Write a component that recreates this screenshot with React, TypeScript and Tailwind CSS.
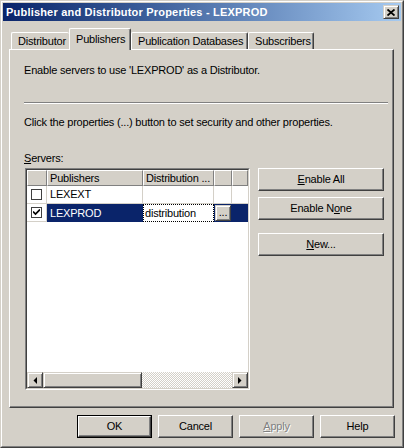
const raised =
  "bg-[#d4d0c8] border border-t-white border-l-white border-r-[#404040] border-b-[#404040] shadow-[inset_-1px_-1px_#808080]";
const raisedSb =
  "bg-[#d4d0c8] border border-t-[#d4d0c8] border-l-[#d4d0c8] border-r-[#404040] border-b-[#404040] shadow-[inset_1px_1px_#ffffff,inset_-1px_-1px_#808080]";

function Button({
  children,
  className = "",
  isDefault = false,
}: {
  children: React.ReactNode;
  className?: string;
  isDefault?: boolean;
}) {
  if (isDefault) {
    return (
      <div className={`border border-black ${className}`}>
        <div className={`h-full flex items-center justify-center ${raised}`}>{children}</div>
      </div>
    );
  }
  return <div className={`flex items-center justify-center ${raised} ${className}`}>{children}</div>;
}

function Check({ checked }: { checked?: boolean }) {
  return (
    <div className="w-[11px] h-[11px] border border-[#404040] bg-white flex items-center justify-center">
      {checked && (
        <svg width="7" height="7" viewBox="0 0 7 7">
          <path d="M0 2.5 L2.5 5 L7 0.5" stroke="#000" strokeWidth="1.7" fill="none" />
        </svg>
      )}
    </div>
  );
}

function Tab({ label, selected, className = "" }: { label: string; selected?: boolean; className?: string }) {
  return (
    <div
      className={`flex items-start pl-[6px] rounded-t-[2px] bg-[#d4d0c8] border-t border-l border-t-white border-l-white ${
        selected
          ? "h-[22px] -mb-px relative z-10 pt-[4px] border-r border-r-[#404040] shadow-[inset_-1px_0_#808080]"
          : "h-[17px] pt-[2px]"
      } ${className}`}
    >
      {label}
    </div>
  );
}

export default function App() {
  return (
    <div className="w-[404px] h-[448px] bg-[#d4d0c8] border border-t-[#d4d0c8] border-l-[#d4d0c8] border-r-[#404040] border-b-[#404040] text-[11px] leading-[13px] tracking-[-0.2px] text-black font-['Liberation_Sans',Arial,sans-serif]">
      <div className="h-full border border-t-white border-l-white border-r-[#808080] border-b-[#808080] p-px flex flex-col">
        {/* title bar */}
        <div className="h-[18px] bg-linear-to-r from-[#0a246a] to-[#a6caf0] flex items-center justify-between pl-[3px] pr-[2px]">
          <span className="text-white font-bold tracking-[0.2px]">Publisher and Distributor Properties - LEXPROD</span>
          <div className={`w-[16px] h-[14px] flex items-center justify-center ${raisedSb}`}>
            <svg width="8" height="7" viewBox="0 0 8 7">
              <path d="M0.5 0.5 L7.5 6.5 M7.5 0.5 L0.5 6.5" stroke="#000" strokeWidth="1.8" />
            </svg>
          </div>
        </div>

        {/* tabs */}
        <div className="mt-[7px] ml-[6px] h-[21px] flex items-end">
          <Tab label="Distributor" className="ml-[2px] w-[58px]" />
          <Tab label="Publishers" selected className="w-[62px]" />
          <Tab label="Publication Databases" className="w-[117px] border-r border-r-[#404040] shadow-[inset_-1px_0_#808080]" />
          <Tab label="Subscribers" className="w-[66px] border-r border-r-[#404040] shadow-[inset_-1px_0_#808080]" />
        </div>

        {/* panel */}
        <div className="ml-[6px] w-[385px] h-[359px] border border-t-white border-l-white border-r-[#404040] border-b-[#404040] shadow-[inset_-1px_-1px_#808080] pl-[14px] flex flex-col">
          <div className="mt-[14px]">Enable servers to use 'LEXPROD' as a Distributor.</div>
          <div className="mt-[25px] w-[364px] h-[2px] border-t border-t-[#808080] border-b border-b-white" />
          <div className="mt-[12px]">Click the properties (...) button to set security and other properties.</div>
          <div className="mt-[23px]">
            <span className="underline">S</span>ervers:
          </div>

          <div className="mt-[3px] ml-px flex">
            {/* grid */}
            <div className="w-[225px] h-[222px] border border-t-[#808080] border-l-[#808080] border-r-white border-b-white">
              <div className="h-full border border-t-[#404040] border-l-[#404040] border-r-[#d4d0c8] border-b-[#d4d0c8] bg-white flex flex-col">
                <div className="h-[16px] flex">
                  {[20, 96, 71, 18, 16].map((w, i) => (
                    <div
                      key={i}
                      style={{ width: w }}
                      className="h-full bg-[#d4d0c8] border border-t-white border-l-white border-r-[#808080] border-b-[#808080] pl-[2px] flex items-center overflow-hidden whitespace-nowrap"
                    >
                      {i === 1 ? "Publishers" : i === 2 ? "Distribution ..." : ""}
                    </div>
                  ))}
                </div>

                <div className="h-[18px] flex">
                  <div className="w-[20px] h-full border-r border-b border-[#d4d0c8] flex items-center justify-center">
                    <Check />
                  </div>
                  <div className="w-[96px] h-full border-r border-b border-[#d4d0c8] pl-[3px] flex items-center">LEXEXT</div>
                  <div className="w-[71px] h-full border-r border-b border-[#d4d0c8]" />
                  <div className="w-[18px] h-full border-r border-b border-[#d4d0c8]" />
                  <div className="w-[16px] h-full border-b border-[#d4d0c8]" />
                </div>

                <div className="h-[18px] flex">
                  <div className="w-[20px] h-full border-r border-b border-[#d4d0c8] flex items-center justify-center">
                    <Check checked />
                  </div>
                  <div className="w-[96px] h-full bg-[#0a246a] text-white pl-[3px] flex items-center">LEXPROD</div>
                  <div className="w-[71px] h-full bg-white border border-dotted border-black pl-[1px] flex items-center">distribution</div>
                  <div className="w-[18px] h-full bg-[#0a246a] flex items-center justify-center">
                    <div className={`w-[16px] h-[16px] flex items-end justify-center pb-[2px] leading-none ${raisedSb}`}>...</div>
                  </div>
                  <div className="w-[16px] h-full bg-[#0a246a]" />
                </div>

                <div className="flex-1" />

                {/* scrollbar */}
                <div className="h-[16px] flex">
                  <div className={`w-[16px] h-full flex items-center justify-center ${raisedSb}`}>
                    <svg width="4" height="7" viewBox="0 0 4 7">
                      <path d="M4 0 L0.5 3.5 L4 7 Z" fill="#000" />
                    </svg>
                  </div>
                  <div className={`w-[99px] h-full ${raisedSb}`} />
                  <div className="w-[90px] h-full bg-[repeating-conic-gradient(#d4d0c8_0_25%,#ffffff_0_50%)] bg-[length:2px_2px]" />
                  <div className={`w-[16px] h-full flex items-center justify-center ${raisedSb}`}>
                    <svg width="4" height="7" viewBox="0 0 4 7">
                      <path d="M0 0 L3.5 3.5 L0 7 Z" fill="#000" />
                    </svg>
                  </div>
                </div>
              </div>
            </div>

            {/* side buttons */}
            <div className="ml-[8px] w-[126px] flex flex-col">
              <Button className="h-[23px]">
                <span>
                  <span className="underline">E</span>nable All
                </span>
              </Button>
              <Button className="h-[23px] mt-[6px]">
                <span>
                  Enable N<span className="underline">o</span>ne
                </span>
              </Button>
              <Button className="h-[23px] mt-[13px]">
                <span>
                  <span className="underline">N</span>ew...
                </span>
              </Button>
            </div>
          </div>
        </div>

        {/* bottom buttons */}
        <div className="mt-[7px] flex justify-end gap-[6px] pr-[6px]">
          <Button isDefault className="w-[75px] h-[23px]">OK</Button>
          <Button className="w-[75px] h-[23px]">Cancel</Button>
          <Button className="w-[75px] h-[23px]">
            <span className="text-[#808080] [text-shadow:1px_1px_#ffffff]">
              <span className="underline">A</span>pply
            </span>
          </Button>
          <Button className="w-[75px] h-[23px]">Help</Button>
        </div>
      </div>
    </div>
  );
}
